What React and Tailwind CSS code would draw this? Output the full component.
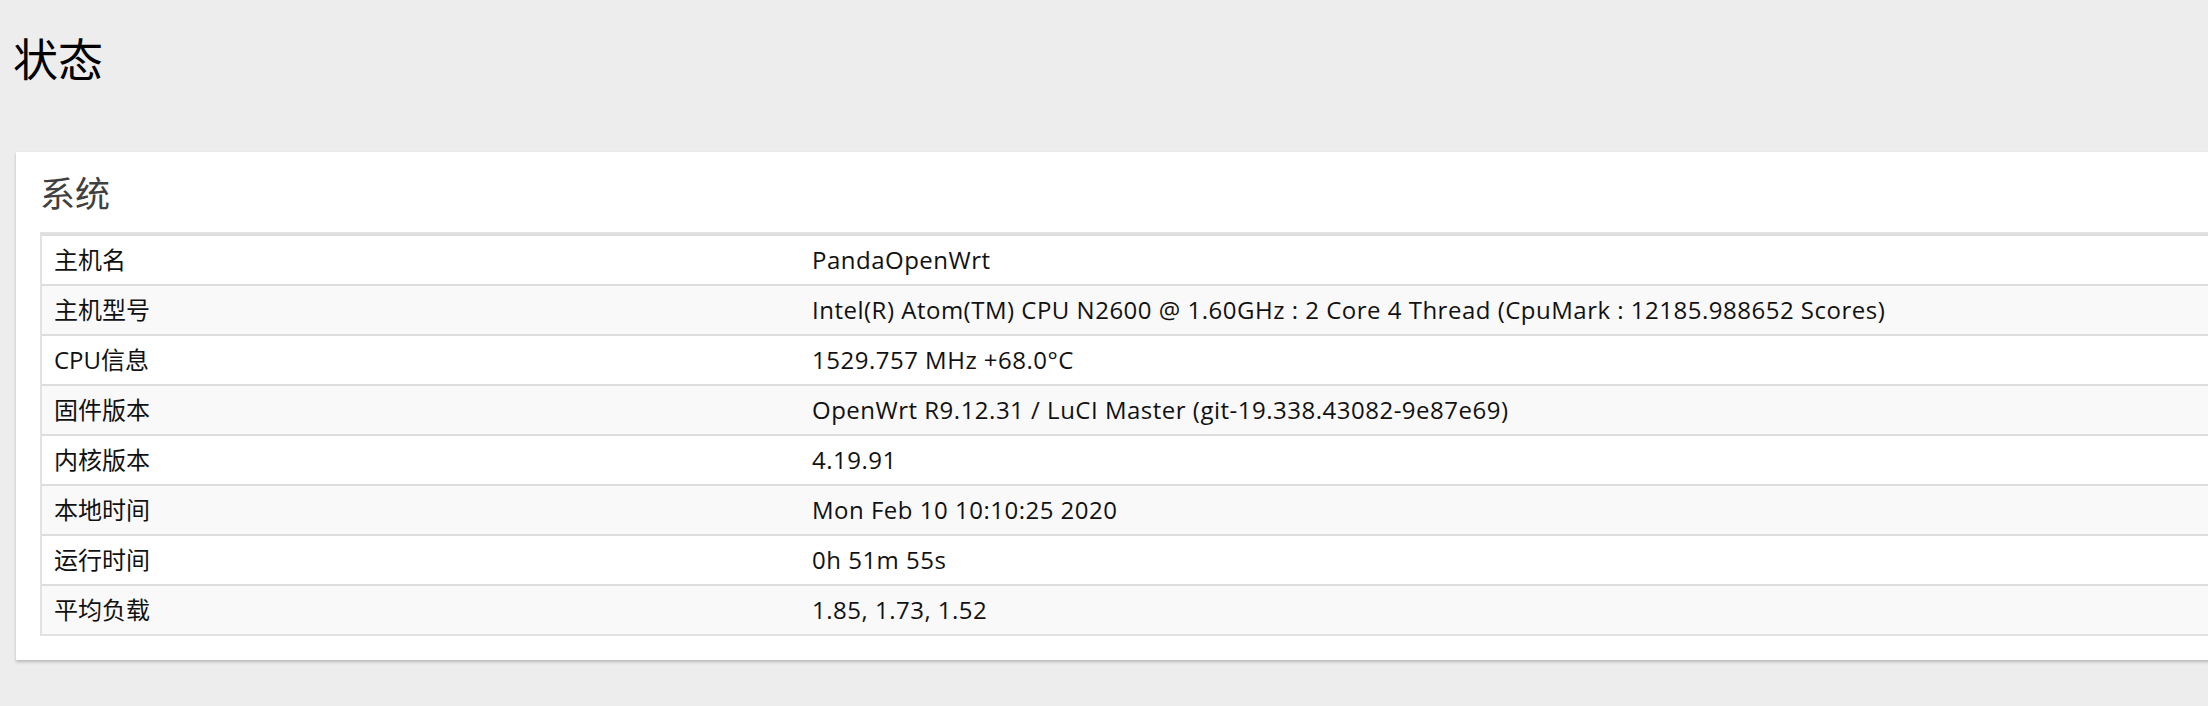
import React from "react";

const rows = [
  ["主机名", "PandaOpenWrt"],
  ["主机型号", "Intel(R) Atom(TM) CPU N2600 @ 1.60GHz : 2 Core 4 Thread (CpuMark : 12185.988652 Scores)"],
  ["CPU信息", "1529.757 MHz +68.0°C"],
  ["固件版本", "OpenWrt R9.12.31 / LuCI Master (git-19.338.43082-9e87e69)"],
  ["内核版本", "4.19.91"],
  ["本地时间", "Mon Feb 10 10:10:25 2020"],
  ["运行时间", "0h 51m 55s"],
  ["平均负载", "1.85, 1.73, 1.52"],
];

export default function App() {
  return (
    <div
      className="w-[2208px] h-[706px] overflow-hidden bg-[#ededed] text-[#111]"
      style={{ fontFamily: '"Open Sans", "Noto Sans CJK SC", sans-serif' }}
    >
      <h2 className="pl-[13px] pt-[30px] text-[45px] leading-[60px] font-normal text-black">状态</h2>
      <div className="mt-[62px] ml-[16px] w-[2240px] bg-white pt-[20px] pb-[24px] pl-[24px] shadow-[0_2px_3px_rgba(0,0,0,0.22)]">
        <h3 className="text-[35px] leading-[44px] text-[#404040] font-normal">系统</h3>
        <div className="mt-[16px] border-t-2 border-l-2 border-b-2 border-[#e2e2e2]">
          {rows.map(([k, v], i) => (
            <div
              key={k}
              className={`flex h-[50px] items-center border-t-2 border-[#dddddd] text-[24px] ${
                i % 2 === 0 ? "bg-white" : "bg-[#f9f9f9]"
              }`}
            >
              <div className="w-[758px] pl-[12px]">{k}</div>
              <div className="pl-[12px] whitespace-nowrap tracking-[0.5px]">{v}</div>
            </div>
          ))}
        </div>
      </div>
    </div>
  );
}
